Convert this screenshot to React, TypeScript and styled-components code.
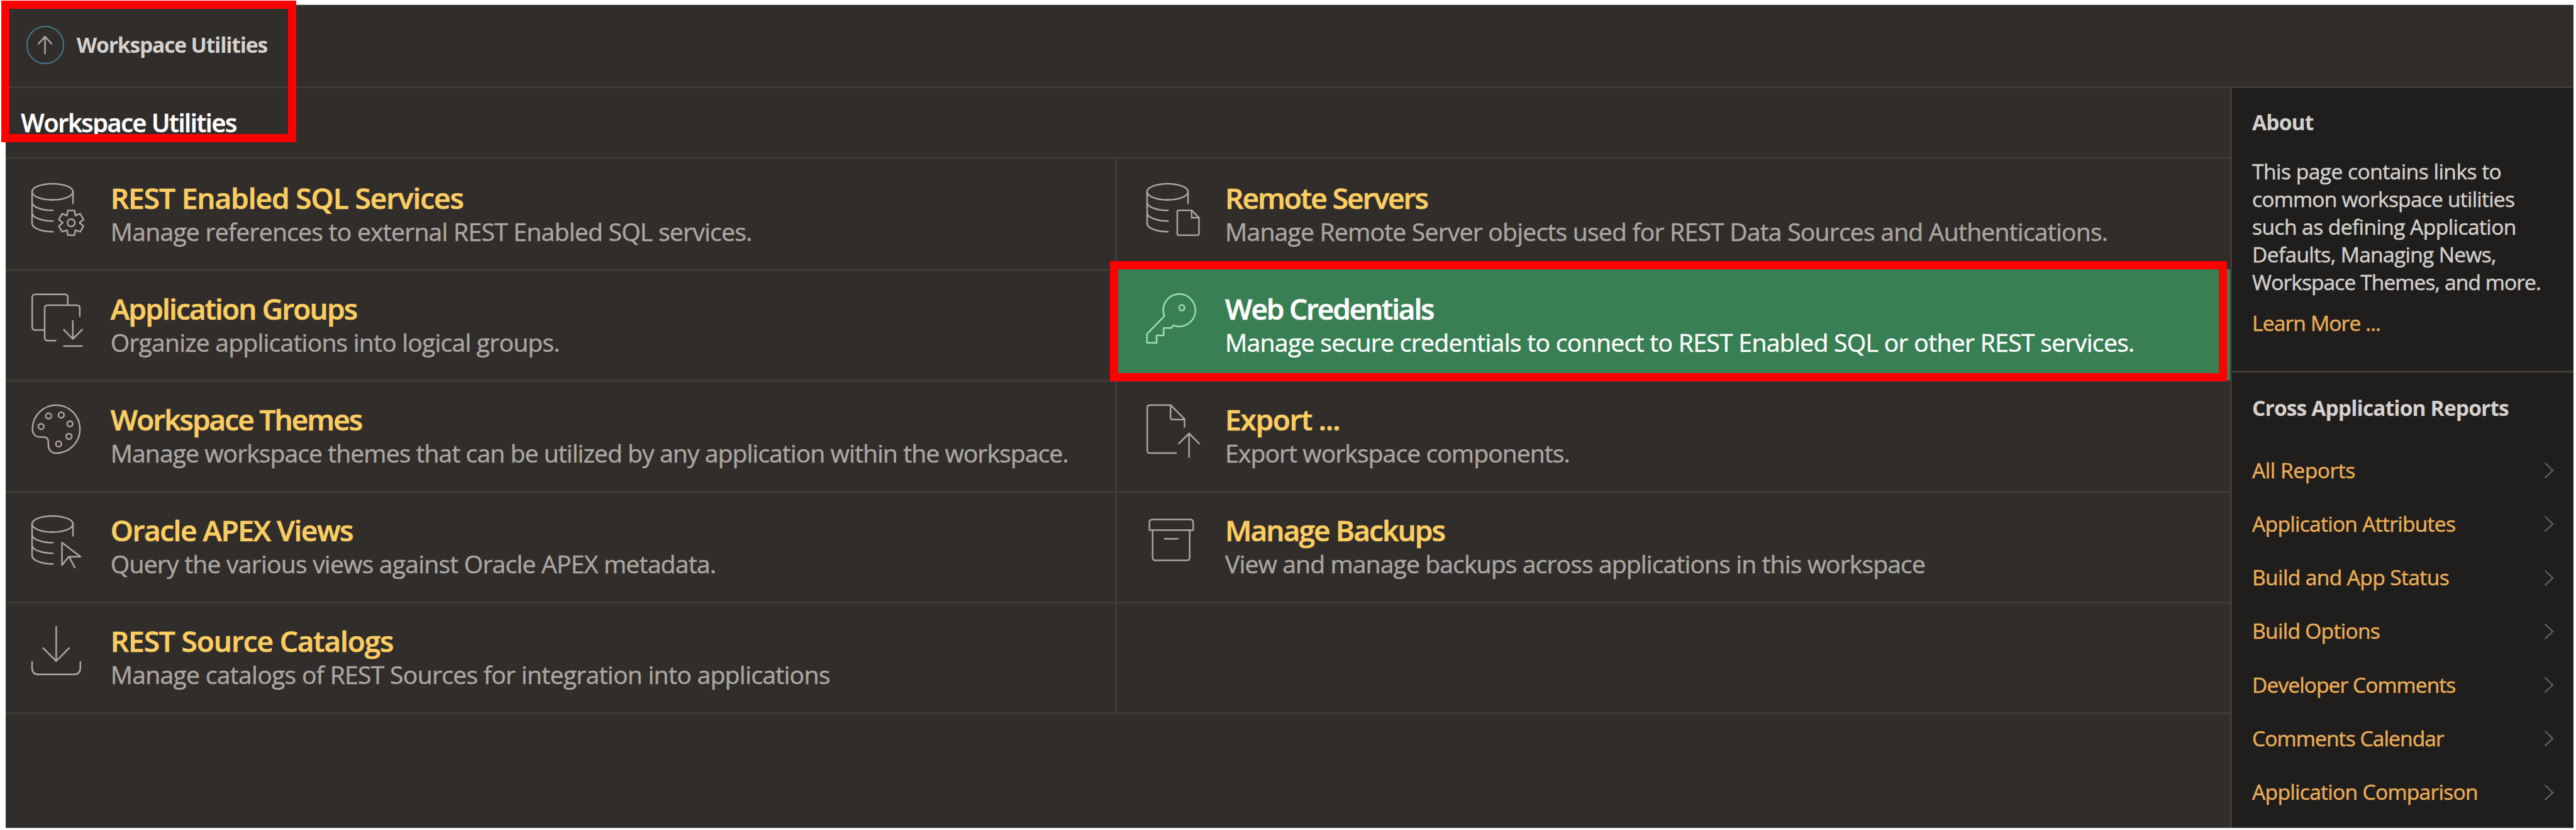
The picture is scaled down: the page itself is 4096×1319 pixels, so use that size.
import React from "react";
import styled, { createGlobalStyle, css } from "styled-components";

/* 1rem is ten design units; the design is 423.9rem wide */
const GlobalStyle = createGlobalStyle`
  html { font-size: 9.6627px; }
  body { margin: 0; background: #fff; font-family: "Open Sans", "Noto Sans", sans-serif; }
  *, *::before, *::after { box-sizing: border-box; }
  h1, h2, h3, p, ul { margin: 0; padding: 0; }
`;

const rule = "3px solid #3f3b37";
const iconColor = "#aea59b";

const Page = styled.div`
  position: relative;
  width: 4096px;
  height: 1319px;
  overflow: hidden;
  padding: 0.7rem 0 0 0.91rem;
`;

const Shell = styled.div`
  display: flex;
  flex-direction: column;
  width: 422.59rem;
  height: 135.5rem;
  background: #312d2a;
  border-top: 1px solid #c9c5c3;
  border-bottom: 1px solid #6f6c69;
`;

const TopBar = styled.header`
  display: flex;
  align-items: center;
  gap: 2rem;
  height: 13.66rem;
  padding: 0 0 0.24rem 3.39rem;
  border-bottom: ${rule};
`;

const UpButton = styled.span`
  display: flex;
  width: 6.3rem;
  height: 6.3rem;
  align-items: center;
  justify-content: center;
  border: 2px solid #43798a;
  border-radius: 50%;
  svg { width: 2.6rem; height: 3.2rem; }
`;

const tracked = css<{ $track: number }>`
  letter-spacing: ${(p) => p.$track}px;
  white-space: nowrap;
`;

/* slightly heavier body weight */
const sturdy = css`
  -webkit-text-stroke: 0.45px currentColor;
`;

const Crumb = styled.span`
  ${tracked}
  font-size: 3.48rem;
  font-weight: 700;
  line-height: 4rem;
  color: #d4d1ce;
`;

const Columns = styled.div`
  display: flex;
  flex: 1;
  min-height: 0;
`;

const Main = styled.main`
  width: 366.03rem;
`;

const TitleBar = styled.div`
  height: 11.64rem;
  padding: 3.26rem 0 0 2.54rem;
  border-bottom: ${rule};
`;

const PageTitle = styled.h1`
  ${tracked}
  -webkit-text-stroke: 0.6px currentColor;
  font-size: 4.1rem;
  font-weight: 600;
  line-height: 5rem;
  color: #fff;
`;

const Grid = styled.div`
  display: grid;
  grid-template-columns: 182.61rem 1fr;
  grid-auto-rows: 18.22rem;
  border-bottom: ${rule};
`;

const Cell = styled.div<{ $active?: boolean }>`
  display: flex;
  gap: 3.8rem;
  padding: 3.3rem 0 0 3.89rem;
  border-top: ${rule};
  color: ${iconColor};
  &:nth-child(even) {
    padding-left: 4.38rem;
    border-left: ${rule};
  }
  &:nth-child(-n + 2) { border-top-color: transparent; }
  ${(p) =>
    p.$active &&
    css`
      && {
        background: #397f54;
        border-top-color: #397f54;
        color: #a3dbba;
      }
    `}
`;

const IconBox = styled.svg`
  flex: none;
  width: 9.6rem;
  height: 9.6rem;
  fill: none;
  stroke: currentColor;
  stroke-width: 2.6;
  stroke-linecap: round;
  stroke-linejoin: round;
`;

const ItemBody = styled.div`
  padding-top: 0.08rem;
`;

const ItemTitle = styled.h2<{ $active?: boolean }>`
  ${tracked}
  -webkit-text-stroke: 0.7px currentColor;
  font-size: 4.76rem;
  font-weight: 600;
  line-height: 5.4rem;
  color: ${(p) => (p.$active ? "#fff" : "#facd62")};
`;

const ItemText = styled.p<{ $active?: boolean }>`
  ${tracked}
  ${sturdy}
  margin-top: 0.2rem;
  font-size: 4.05rem;
  line-height: 5.4rem;
  color: ${(p) => (p.$active ? "#fff" : "#aba7a3")};
`;

const Aside = styled.aside`
  flex: 1;
  background: #201e1c;
  border-left: ${rule};
`;

const AboutPanel = styled.section`
  height: 46.82rem;
  padding: 3.66rem 0 0 3.36rem;
  border-bottom: ${rule};
`;

const ReportsPanel = styled.section`
  padding: 3.8rem 3.2rem 0 3.36rem;
`;

const PanelTitle = styled.h3`
  ${tracked}
  font-size: 3.48rem;
  font-weight: 700;
  line-height: 4rem;
  color: #d4d1ce;
`;

const AboutText = styled.div`
  margin-top: 3.72rem;
`;

const AboutLine = styled.p`
  ${tracked}
  ${sturdy}
  font-size: 3.48rem;
  line-height: 4.555rem;
  color: #d4d1ce;
`;

const LearnMore = styled.a`
  ${tracked}
  ${sturdy}
  display: block;
  margin-top: 2.3rem;
  font-size: 3.48rem;
  line-height: 4.55rem;
  color: #ebae56;
`;

const ReportList = styled.ul`
  margin-top: 3.9rem;
  list-style: none;
`;

const ReportRow = styled.li`
  display: flex;
  align-items: center;
  justify-content: space-between;
  height: 8.82rem;
  svg { width: 1.7rem; height: 2.8rem; }
`;

const ReportLink = styled.a`
  ${tracked}
  ${sturdy}
  font-size: 3.48rem;
  line-height: 4.55rem;
  color: #ebae56;
`;

const Callout = styled.div<{ $x: number; $y: number; $w: number; $h: number }>`
  position: absolute;
  left: ${(p) => p.$x}rem;
  top: ${(p) => p.$y}rem;
  width: ${(p) => p.$w}rem;
  height: ${(p) => p.$h}rem;
  border: 1.4rem solid #f00;
`;

/* cog outline: six teeth with a single valley point between them */
const cog = (() => {
  const at = (r: number, deg: number) => {
    const a = (deg * Math.PI) / 180;
    return `${(69.5 + r * Math.cos(a)).toFixed(2)} ${(69.4 - r * Math.sin(a)).toFixed(2)}`;
  };
  const pts: string[] = [];
  for (let i = 0; i < 6; i++) {
    const a = 90 + i * 60;
    pts.push(at(21, a - 15), at(21, a + 15), at(13.8, a + 30));
  }
  return `M${pts.join("L")}Z`;
})();

const Database = () => (
  <>
    <ellipse cx="38.8" cy="18.4" rx="33.7" ry="13.3" />
    <path d="M5.2 18.4V70.7C5.2 78 20 84 39.5 84M5.2 35.7C5.2 43 20 49 39.5 49M5.2 53C5.2 60.4 20 66.4 39.5 66.4M72.5 18.4V37.7" />
  </>
);

const icons: Record<string, React.ReactNode> = {
  dbGear: (
    <>
      <Database />
      <path d={cog} />
      <circle cx="69.5" cy="69.4" r="6.1" />
    </>
  ),
  dbFile: (
    <>
      <Database />
      <path d="M56.8 48.8H78.5L90.5 61V87.5Q90.5 89.8 88.3 89.8H56.8Q54.8 89.8 54.8 87.5V51Q54.8 48.8 56.8 48.8ZM78.5 48.8V61H90.5" />
    </>
  ),
  groups: (
    <path d="M25.9 63.7H10.4Q5.4 63.7 5.4 58.7V10Q5.4 5 10.4 5H58.9Q63.9 5 63.9 10V22.7M44 81H30.9Q25.9 81 25.9 76V27.7Q25.9 22.7 30.9 22.7H78.7Q83.7 22.7 83.7 27.7V41M72.2 48.6V78.4M57.4 63L72.2 78.4L87.4 63M57.4 90H87.4" />
  ),
  key: (
    <>
      <path d="M33.5 40.7L5 70V84.7H20.8V72.4H32.3V60.4H44.5L48.8 56A26.4 26.6 0 1 0 33.5 40.7Z" />
      <ellipse cx="62.3" cy="27" rx="4.3" ry="4.8" />
    </>
  ),
  palette: (
    <>
      <path d="M5.8 44.5A39.1 39.6 0 0 1 84 44.5A39.1 39.6 0 0 1 44.9 84C36 84 31.9 77 31.9 70V66C31.9 60.5 29 57.5 24 57.5H18C11 57.5 5.8 52 5.8 44.5Z" />
      <circle cx="32.3" cy="22.8" r="4.6" />
      <circle cx="53.2" cy="21.2" r="4.6" />
      <circle cx="67.5" cy="35.8" r="4.6" />
      <circle cx="20" cy="40.2" r="4.6" />
      <circle cx="65.9" cy="56.5" r="4.6" />
      <circle cx="48.9" cy="68.8" r="4.6" />
    </>
  ),
  exportFile: (
    <path d="M52.8 83.8H9.4Q5.4 83.8 5.4 79.8V8.8Q5.4 4.8 9.4 4.8H43.7L66.7 27.8V40.8M43.7 4.8V24.8Q43.7 28.8 47.7 28.8H66.5M74.2 51.5V90.3M57.4 68.2L74.2 51.5L90.8 68.2" />
  ),
  dbCursor: (
    <>
      <Database />
      <path d="M54.4 49L84.9 72.2H65.5L54.4 86ZM66.5 73L75.4 90" />
    </>
  ),
  archive: (
    <path d="M9 28.5V15.8Q9 10.8 14 10.8H76Q81 10.8 81 15.8V28.5ZM14.2 28.5V73.2Q14.2 78.2 19.2 78.2H70.2Q75.2 78.2 75.2 73.2V28.5M34 42.8H55.5" />
  ),
  download: (
    <path d="M44.9 5V61.5M23.4 40.3L44.9 61.7L66 40.3M5.2 63V72.7Q5.2 83.7 16.2 83.7H73.6Q84.6 83.7 84.6 72.7V63" />
  ),
};

type Item = { icon: string; title: string; tt: number; text: string; dt: number; active?: boolean };

const items: (Item | null)[] = [
  { icon: "dbGear", title: "REST Enabled SQL Services", tt: -1.06, text: "Manage references to external REST Enabled SQL services.", dt: -0.77 },
  { icon: "dbFile", title: "Remote Servers", tt: -1.97, text: "Manage Remote Server objects used for REST Data Sources and Authentications.", dt: -0.8 },
  { icon: "groups", title: "Application Groups", tt: -1.84, text: "Organize applications into logical groups.", dt: -0.81 },
  { icon: "key", title: "Web Credentials", tt: -2.13, text: "Manage secure credentials to connect to REST Enabled SQL or other REST services.", dt: -0.7, active: true },
  { icon: "palette", title: "Workspace Themes", tt: -1.99, text: "Manage workspace themes that can be utilized by any application within the workspace.", dt: -0.95 },
  { icon: "exportFile", title: "Export ...", tt: -1.31, text: "Export workspace components.", dt: -0.94 },
  { icon: "dbCursor", title: "Oracle APEX Views", tt: -1.44, text: "Query the various views against Oracle APEX metadata.", dt: -0.8 },
  { icon: "archive", title: "Manage Backups", tt: -1.88, text: "View and manage backups across applications in this workspace", dt: -0.9 },
  { icon: "download", title: "REST Source Catalogs", tt: -1.09, text: "Manage catalogs of REST Sources for integration into applications", dt: -0.72 },
  null,
];

const aboutLines: [string, number][] = [
  ["This page contains links to", -0.55],
  ["common workspace utilities", -0.81],
  ["such as defining Application", -0.61],
  ["Defaults, Managing News,", -0.72],
  ["Workspace Themes, and more.", -0.95],
];

const reports: [string, number][] = [
  ["All Reports", -0.48],
  ["Application Attributes", -0.75],
  ["Build and App Status", -0.65],
  ["Build Options", -0.74],
  ["Developer Comments", -0.96],
  ["Comments Calendar", -0.93],
  ["Application Comparison", -0.73],
];

export default function App() {
  return (
    <>
      <GlobalStyle />
      <Page>
        <Shell>
          <TopBar>
            <UpButton>
              <svg viewBox="0 0 26 32" fill="none" stroke="#aea8a2" strokeWidth="2.6" strokeLinecap="round" strokeLinejoin="round">
                <path d="M13 2.2V30M2.2 14L13 2.2L23.8 14" />
              </svg>
            </UpButton>
            <Crumb $track={-1.18}>Workspace Utilities</Crumb>
          </TopBar>
          <Columns>
            <Main>
              <TitleBar>
                <PageTitle $track={-1.34}>Workspace Utilities</PageTitle>
              </TitleBar>
              <Grid>
                {items.map((it, i) =>
                  it ? (
                    <Cell key={it.title} $active={it.active}>
                      <IconBox viewBox="0 0 96 96">{icons[it.icon]}</IconBox>
                      <ItemBody>
                        <ItemTitle $track={it.tt} $active={it.active}>{it.title}</ItemTitle>
                        <ItemText $track={it.dt} $active={it.active}>{it.text}</ItemText>
                      </ItemBody>
                    </Cell>
                  ) : (
                    <Cell key={i} />
                  ),
                )}
              </Grid>
            </Main>
            <Aside>
              <AboutPanel>
                <PanelTitle $track={-0.94}>About</PanelTitle>
                <AboutText>
                  {aboutLines.map(([t, k]) => (
                    <AboutLine key={t} $track={k}>{t}</AboutLine>
                  ))}
                </AboutText>
                <LearnMore $track={-0.89}>Learn More ...</LearnMore>
              </AboutPanel>
              <ReportsPanel>
                <PanelTitle $track={-0.91}>Cross Application Reports</PanelTitle>
                <ReportList>
                  {reports.map(([t, k]) => (
                    <ReportRow key={t}>
                      <ReportLink $track={k}>{t}</ReportLink>
                      <svg viewBox="0 0 17 28" fill="none" stroke="#625f5c" strokeWidth="2.4" strokeLinecap="round">
                        <path d="M2.3 2.3L14.5 14L2.3 25.7" />
                      </svg>
                    </ReportRow>
                  ))}
                </ReportList>
              </ReportsPanel>
            </Aside>
          </Columns>
        </Shell>
        <Callout $x={0.2} $y={0.1} $w={48.52} $h={23.27} />
        <Callout $x={182.61} $y={42.98} $w={183.9} $h={19.72} />
      </Page>
    </>
  );
}
